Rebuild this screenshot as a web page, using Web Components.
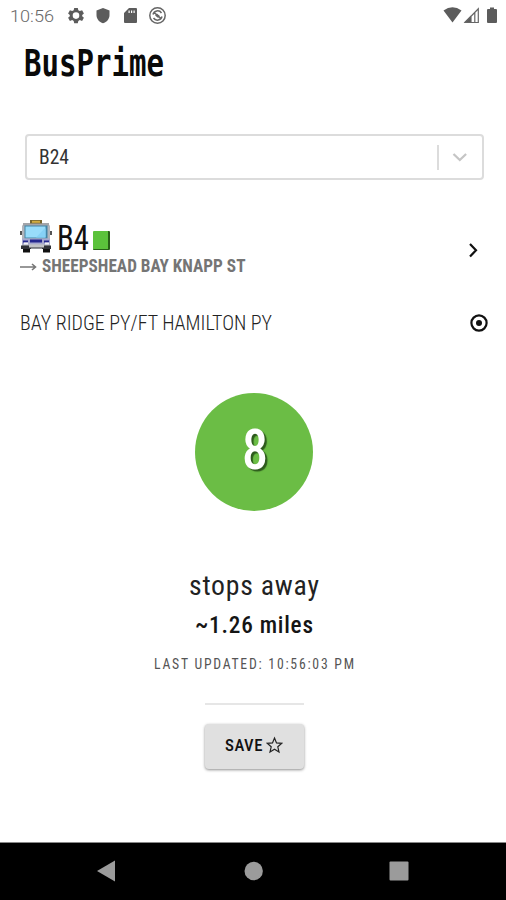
<!DOCTYPE html>
<html lang="en"><head><meta charset="utf-8"><title>BusPrime</title>
<style>html,body{margin:0;background:#fff}body{width:506px;height:900px;overflow:hidden}</style></head><body>
<bus-app></bus-app>
<script>
const define=(name,html,setup)=>customElements.define(name,class extends HTMLElement{
  connectedCallback(){
    if(this.shadowRoot)return;
    const t=document.createElement('template');t.innerHTML=html;
    this.attachShadow({mode:'open'}).append(t.content.cloneNode(true));
    if(setup)setup(this,this.shadowRoot);
  }
});

/* One line of condensed text, scaled horizontally to the width in its attribute. */
define('fit-text',`<style>:host{display:block;flex:none;white-space:nowrap;font-family:Roboto,"Liberation Sans",sans-serif;font-stretch:75%}
span{display:inline-block;transform-origin:0 50%}</style><span></span>`,(host,root)=>{
  const s=root.querySelector('span'),w=+host.getAttribute('width');
  s.textContent=host.getAttribute('text');
  host.style.width=w+'px';
  const ls=parseFloat(getComputedStyle(s).letterSpacing)||0;
  s.style.transform='scaleX('+w/(s.getBoundingClientRect().width-ls)+')';
});

define('status-bar',`<style>:host{display:flex;height:32px;align-items:center;box-sizing:border-box;padding:0 8px 0 10px;color:#686868}
fit-text{font-size:17px;line-height:32px;font-stretch:100%;font-weight:300}svg{display:block;fill:#5c5c5c;flex:none}.r{margin-left:auto;display:flex}</style>
<fit-text width="44" text="10:56"></fit-text>
<svg width="112" height="32" viewBox="54 0 112 32">
<g transform="translate(76 15.5)"><path fill-rule="evenodd" d="M-1.8-7.5h3.6l.5 2.2 1.5.9 2.3-.8 1.8 3.1L6.200-.6V.8l1.700 1.500-1.800 3.100-2.300-.8-1.500.9-.5 2.200h-3.600l-.5-2.200-1.500-.9-2.300.8-1.800-3.100L-6.200.8V-.6l-1.700-1.500 1.800-3.100 2.300.8 1.500-.9zM0-3.200a3.300 3.300 0 1 0 0 6.600a3.300 3.300 0 1 0 0-6.600z"/></g>
<path d="M103 8l6.500 2.500v4.500c0 4-2.700 7-6.500 8.200-3.800-1.200-6.500-4.200-6.500-8.200v-4.500z"/>
<path fill-rule="evenodd" d="M129 8h7q1 0 1 1v13q0 1-1 1h-11q-1 0-1-1v-9zM128.500 10.500v2.500h1.200v-2.500zM131 10.500v2.500h1.200v-2.500zM133.500 10.500v2.500h1.200v-2.500z"/>
<g fill="none" stroke="#666" stroke-width="1.500"><circle cx="157.500" cy="15.500" r="7.700"/><path d="M153 14.500a4.700 4.700 0 0 1 8.500-1.500M162 16.500a4.700 4.700 0 0 1-8.500 1.500M153.500 12l8 7"/><path d="M156 14.500l3 2.500" stroke-width="2.800"/></g></svg>
<svg class="r" width="58" height="32" viewBox="440 0 58 32"><path d="M443.500 10.500Q452.500 4 461.500 10.500L452.500 22.500z"/><path d="M464 22.500L471 15.500V22.500z"/><path d="M465 22.500L478.300 8.800V22.500zM471 16v6.500M474.800 13v9.500" fill="none" stroke="#666" stroke-width="1.200"/><path d="M490 7.500h4v1.500h2q1 0 1 1v12q0 1-1 1h-8q-1 0-1-1v-12q0-1 1-1h2z"/></svg>`);

define('route-select',`<style>:host{display:flex;box-sizing:border-box;width:459px;height:46px;margin:0 0 0 25px;border:2px solid #dcdcdc;border-radius:4px;padding-left:12px;align-items:center;color:#333}
fit-text{font-size:20px;line-height:42px;font-weight:400}i{margin-left:auto;width:2px;height:25px;background:#dcdcdc}svg{display:block;margin:0 12px 0 11px}</style>
<fit-text width="30" text="B24"></fit-text><i></i><svg width="20" height="20"><path d="M3.500 7l6.300 6 6.300-6" fill="none" stroke="#c5c5c5" stroke-width="2.300"/></svg>`);

define('bus-icon',`<style>:host{display:block;width:33px;height:33px;flex:none}svg{display:block}</style>
<svg width="33" height="33" viewBox="0 0 33 33">
<path d="M3 27h7v5.500H3zM23 27h7v5.500h-7z" fill="#111"/>
<path d="M0 11h32v4H0z" fill="#555"/>
<path d="M4 3h24l2 3v22H2V6z" fill="#b2b5bb"/><path d="M3 3h26v3H3z" fill="#a3a5aa"/>
<path d="M10 0h12v3.500H10z" fill="#78652d"/><path d="M12 .8h8v2h-8z" fill="#d1ac42"/>
<path d="M4.500 5.500h23v13h-23z" fill="#4285a8"/><path d="M5.500 6.500h20v11h-20z" fill="#98dcfb"/><path d="M16 17.500l8.500-9h1v9z" fill="#86d1f6"/>
<path d="M2 18.500h28v6H2z" fill="#a6a8ce"/><path d="M3 20.500h5v2H3zM24 20.500h5v2h-5zM10 19.500h12v3H10z" fill="#25278f"/>
<path d="M4 22.500h4v2H4zM25 22.500h4v2h-4z" fill="#f2f2f6"/>
<path d="M1 25.500h30v3.500H1z" fill="#303238"/><path d="M9 24.500h15v3H9z" fill="#c2c3c7"/><path d="M11 28h11v1H11z" fill="#92949a"/></svg>`);

define('route-header',`<style>:host{display:flex;height:57px;padding:0 26px 0 20px;align-items:flex-start;justify-content:space-between}
.top{display:flex;height:36px}.top fit-text{font-size:35px;line-height:37px;font-weight:400;color:#111;margin-left:4px}
.block{width:17px;height:19px;box-sizing:border-box;background:#5bc23b;border-right:2px solid #286018;border-bottom:1px solid #286018;border-radius:1px;margin:11px 0 0 4px}
.dest{display:flex;align-items:center;height:21px;gap:5px;color:#757575}.dest fit-text{font-size:17.500px;line-height:21px;font-weight:700}svg{display:block}.go{margin-top:21px}</style>
<div><div class="top"><bus-icon></bus-icon><fit-text width="32" text="B4"></fit-text><div class="block"></div></div>
<div class="dest"><svg width="17" height="12"><path d="M0 6h15M12 3l3.500 3-3.500 3" fill="none" stroke="#777" stroke-width="1.600"/></svg><fit-text width="203.500" text="SHEEPSHEAD BAY KNAPP ST"></fit-text></div></div>
<svg class="go" width="13" height="18"><path d="M3 3l6 6.300-6 6.300" fill="none" stroke="#111" stroke-width="2.200"/></svg>`);

define('stop-row',`<style>:host{display:flex;height:24px;align-items:center;justify-content:space-between;padding:0 17px 0 20px;color:#222}fit-text{font-size:20px;line-height:24px;font-weight:300}svg{display:block}</style>
<fit-text width="252" text="BAY RIDGE PY/FT HAMILTON PY"></fit-text><svg width="20" height="20"><circle cx="10" cy="10" r="7.600" fill="none" stroke="#111" stroke-width="2.200"/><circle cx="10" cy="10" r="3" fill="#111"/></svg>`);

define('stop-count',`<style>:host{display:flex;width:118px;height:118px;border-radius:50%;background:#6bbd45;align-items:center;justify-content:center;color:#fff;flex:none}
fit-text{font-size:55px;line-height:114px;height:118px;font-weight:500;text-shadow:2.500px 2px 1px #2d5a1c;margin-left:2px}</style><fit-text width="26" text="8"></fit-text>`);

define('save-button',`<style>:host{display:flex;width:99px;height:45px;border-radius:4px;background:#e0e0e0;box-shadow:0 1px 3px rgba(0,0,0,.45);align-items:center;justify-content:center;gap:4px;color:#111;flex:none}
fit-text{font-size:16.500px;line-height:43px;height:45px;font-weight:500;letter-spacing:.5px}svg{display:block;margin-top:-4px}</style>
<fit-text width="37.500" text="SAVE"></fit-text><svg width="17" height="18"><path d="M8.500 2l2 4.900 5.300.4-4 3.500 1.200 5.200-4.500-2.800L4 16l1.200-5.200-4-3.500 5.300-.4z" fill="none" stroke="#222" stroke-width="1.200"/></svg>`);

define('arrival-panel',`<style>:host{display:flex;flex-direction:column;align-items:center;padding-left:2px}
.s{font-size:28.500px;line-height:36px;margin-top:57px;color:#222;letter-spacing:.8px;font-weight:400}
.m{font-size:24px;line-height:30px;margin-top:6px;color:#151515;letter-spacing:.8px;font-weight:480}
.u{font-size:14px;line-height:20px;margin-top:14px;color:#555;letter-spacing:1.800px;font-weight:400}
i{width:99px;height:2px;background:#e6e6e6;margin:29px 0 19px}</style>
<stop-count></stop-count><fit-text class="s" width="130" text="stops away"></fit-text><fit-text class="m" width="118" text="~1.26 miles"></fit-text><fit-text class="u" width="200" text="LAST UPDATED: 10:56:03 PM"></fit-text><i></i><save-button></save-button>`);

define('nav-bar',`<style>:host{display:block;margin-top:auto;height:58px;background:#000;border-top:1px solid #888;box-sizing:border-box}svg{display:block}</style>
<svg width="506" height="57" viewBox="0 843 506 57" fill="#9b9b9b"><path d="M97 871l18-10.500v21z"/><circle cx="253.700" cy="871" r="9.200"/><rect x="389.500" y="861.500" width="19" height="19" rx="1"/></svg>`);

define('bus-app',`<style>:host{display:flex;flex-direction:column;width:506px;height:900px;background:#fff}
.logo{font:700 37px/44px "DejaVu Sans Mono",monospace;color:#0a0a0a;margin:10px 0 48px 24px}.logo,route-select{flex:none}
route-header{margin-top:40px}stop-row{margin-top:34px}arrival-panel{margin-top:58px}</style>
<status-bar></status-bar><fit-text class="logo" width="140" text="BusPrime"></fit-text><route-select></route-select><route-header></route-header><stop-row></stop-row><arrival-panel></arrival-panel><nav-bar></nav-bar>`);
</script></body></html>
